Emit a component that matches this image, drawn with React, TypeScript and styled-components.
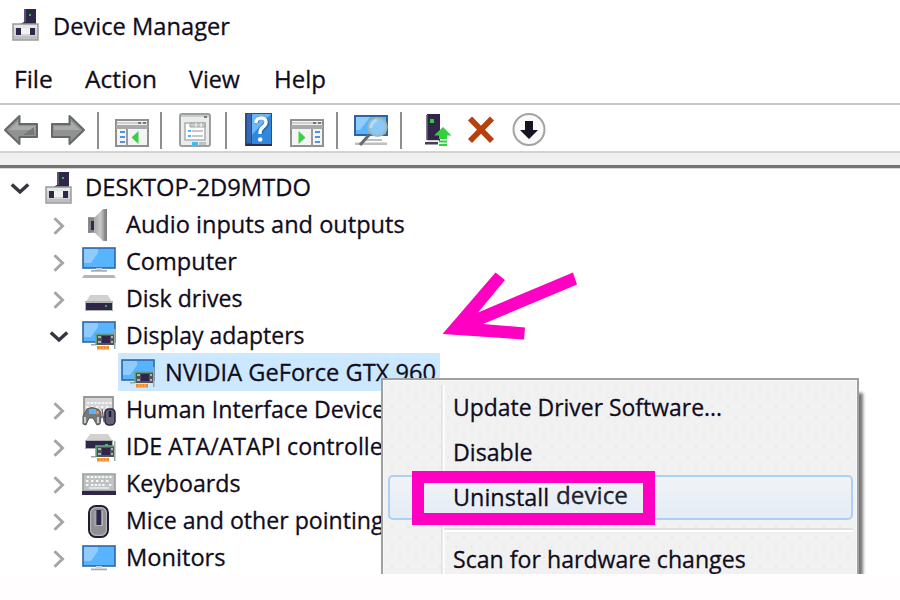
import React from "react";
import styled, { createGlobalStyle } from "styled-components";

const GlobalStyle = createGlobalStyle`
  * { box-sizing: border-box; }
  body { margin: 0; background: #fffdfe; overflow: hidden; }
`;

const Window = styled.main`
  position: relative;
  width: 900px;
  height: 574px;
  overflow: hidden;
  background: #fff;
  color: #100c1c;
  font-family: "Open Sans", "Noto Sans", sans-serif;
  font-size: 24.5px;
  line-height: 36px;
  white-space: nowrap;
`;

const Label = styled.span<{ $fit?: number }>`
  display: inline-block;
  transform: scaleX(${(p) => p.$fit ?? 0.96});
  transform-origin: left center;
  -webkit-text-stroke: 0.3px #100c1c;
`;

const Icon = styled.svg`
  display: block;
  flex: none;
  overflow: visible;
`;

const TitleBar = styled.header`
  display: flex;
  height: 54px;
  padding: 8px 0 0 12px;
  gap: 14px;
`;

const MenuBar = styled.nav`
  display: grid;
  grid-template-columns: 71px 104px 85px 80px;
  height: 49px;
  padding: 7px 0 0 14px;
`;

const Toolbar = styled.div`
  display: flex;
  align-items: flex-start;
  height: 48px;
  padding: 7px 0 0 4px;
  border-top: 2px solid #c3c6c5;
`;

const Tool = styled.div<{ $before: number }>`
  flex: none;
  padding-top: 1px;
  margin-left: ${(p) => p.$before}px;
`;

const Divider = styled.div<{ $before: number }>`
  width: 2px;
  height: 37px;
  margin-left: ${(p) => p.$before}px;
  background: #8e8f93;
`;

const Strip = styled.div`
  height: 17px;
  border-top: 2px solid #d3d3d3;
  border-bottom: 3px solid #707573;
  background: #f0f0f0;
  box-shadow: 0 1px 0 #d5d8d7;
`;

const Tree = styled.ul`
  display: flex;
  flex-direction: column;
  margin: 0;
  padding: 0;
  list-style: none;
`;

const Row = styled.li<{ $depth: number }>`
  display: flex;
  align-items: center;
  height: 37.1px;
  padding-left: ${(p) => 3 + p.$depth * 39.5}px;
`;

const Toggle = styled.div`
  display: flex;
  justify-content: center;
  width: 33px;
  padding-top: 4px;
  flex: none;
`;

const Entry = styled.div<{ $selected?: boolean; $root?: boolean }>`
  display: flex;
  align-items: center;
  height: 100%;
  width: ${(p) => (p.$selected ? "322px" : "auto")};
  margin-left: ${(p) => (p.$selected ? 3 : 0)}px;
  padding-left: ${(p) => (p.$selected ? 3 : p.$root ? 9 : 6.5)}px;
  gap: ${(p) => (p.$root ? 13 : 9.5)}px;
  background: ${(p) => (p.$selected ? "#cce8ff" : "transparent")};
`;

const IconSlot = styled.div<{ $drop: number }>`
  flex: none;
  padding-top: ${(p) => p.$drop}px;
`;

const ContextMenu = styled.div`
  position: absolute;
  left: 381px;
  top: 378px;
  width: 478px;
  height: 240px;
  padding: 5px 4px 0 5px;
  border: 2px solid #a0a0a0;
  background: #f1f1f1;
  box-shadow: inset 0 0 0 1px #f8f8f8, 5px 14px 3px -1px rgba(60, 60, 60, 0.7);
`;

const MenuSurface = styled.div`
  height: 100%;
  background-image:
    linear-gradient(#e2e2e2, #e2e2e2), linear-gradient(#fff, #fff),
    radial-gradient(circle, #e8e8e8 0.8px, transparent 1.5px),
    radial-gradient(circle, #e8e8e8 0.8px, transparent 1.5px);
  background-size: 1.5px 100%, 1.5px 100%, 16px 20px, 16px 20px;
  background-position: 53px 0, 54.5px 0, 60px 12px, 68px 22px;
  background-repeat: no-repeat, no-repeat, repeat, repeat;
`;

const MenuItem = styled.div<{ $active?: boolean }>`
  display: flex;
  align-items: center;
  height: 45px;
  padding: 0 0 2px 63px;
  border-radius: 5px;
  border: 2px solid ${(p) => (p.$active ? "#aed0f5" : "transparent")};
  background: ${(p) => (p.$active ? "linear-gradient(#f1f3f5, #e4ecf6)" : "transparent")};
`;

const Added = styled.span`
  margin-left: 2px;
  transform: translateY(-2px);
  color: #252530;
`;

const MenuRule = styled.div`
  height: 4px;
  margin: 8px 0 5px 56px;
  border-top: 2px solid #e0e0e0;
  border-bottom: 2px solid #fff;
`;

const Highlight = styled.div`
  position: absolute;
  left: 412px;
  top: 471px;
  width: 243px;
  height: 54px;
  border: 12px solid #ff00c3;
`;

const Arrow = styled.svg`
  position: absolute;
  left: 440px;
  top: 268px;
`;

const Hub = () => (
  <Icon width="27" height="34" viewBox="0 0 27 34">
    <path d="M12 1h12v15H8l4-2z" fill="#30264a" />
    <path d="M12 1h2v13h-2z" fill="#5a5468" />
    <path d="M17 6h2v2h-2z" fill="#27c43c" />
    <path d="M1 16h25v16H1z" fill="#d3d5d5" stroke="#989d9b" strokeWidth="1.5" />
    <path d="M2 17h23v3H2z" fill="#e5e6e6" />
    <path d="M4 20h5v7H4zM18 20h5v7h-5z" fill="#30264a" />
    <path d="M9 20h9v6H9z" fill="#f1f1f1" />
    <path d="M2 28h23v3H2z" fill="#bdc0bf" />
  </Icon>
);

const Screen = () => (
  <>
    <rect x="1" y="3" width="32" height="20" fill="#58b4ff" stroke="#3267a5" strokeWidth="1.6" />
    <path d="M2 4h14v4l-7 10H2z" fill="#8fcbfd" />
  </>
);

const ComputerIcon = () => (
  <Icon width="34" height="34" viewBox="0 0 34 34">
    <Screen />
    <path d="M14 23h6v2h-6z" fill="#d0d0d0" />
    <path d="M9 25h16v1.7H9z" fill="#a9abab" />
    <path d="M2 30h30l2 3H0z" fill="#b4b6b6" />
  </Icon>
);

const MonitorIcon = () => (
  <Icon width="34" height="34" viewBox="0 0 34 34">
    <g transform="translate(0 1)">
      <Screen />
      <path d="M14 23h6v2h-6z" fill="#d0d0d0" />
      <path d="M9 25.5h16v1.8H9z" fill="#a9abab" />
    </g>
  </Icon>
);

const Card = () => (
  <>
    <path d="M32 10h1.5v20H32zM9 25h5v1.5H9z" fill="#a1a4a4" />
    <path d="M14 15h18v11H14z" fill="#51525f" />
    <path d="M14 26V15h18" fill="none" stroke="#69ad85" strokeWidth="1.5" />
    <path d="M20 17h8v7h-8z" fill="#30264a" />
    <path d="M16 17h3v2h-3zM29 17h2v2h-2zM16 22h3v2h-3zM29 22h2v2h-2z" fill="#a3b8af" />
    <path d="M15 27h12v3.5H15z" fill="#f28a2c" />
    <path d="M18 27v3.5M21 27v3.5M24 27v3.5" stroke="#ffc488" strokeWidth=".7" />
  </>
);

const DisplayIcon = () => (
  <Icon width="34" height="34" viewBox="0 0 34 34">
    <Screen />
    <Card />
  </Icon>
);

const AudioIcon = () => (
  <Icon width="34" height="34" viewBox="0 0 34 34">
    <defs>
      <linearGradient id="cone">
        <stop stopColor="#8a8a8a" />
        <stop offset=".65" stopColor="#c9c9c9" />
        <stop offset="1" stopColor="#777" />
      </linearGradient>
    </defs>
    <path d="M6 9h7l8-8h4v32h-4l-8-8H6z" fill="url(#cone)" />
    <path d="M7 10h5v14H7z" fill="#858585" />
    <path d="M9 13h3v9H9z" fill="#342b45" />
    <path d="M13 10v14" stroke="#b0b0b0" strokeWidth="1.5" />
    <path d="M23.5 2v30" stroke="#858585" strokeWidth="2" />
  </Icon>
);

const DiskIcon = () => (
  <Icon width="34" height="34" viewBox="0 0 34 34">
    <path d="M8 13h18l4 7H4z" fill="#d1d1d1" />
    <path d="M3 19h28v10H3z" fill="#afb3b3" />
    <path d="M4 21h26v7H4z" fill="#30264a" />
    <path d="M23 23h2v2h-2z" fill="#28be37" />
  </Icon>
);

const KeyRows = () => (
  <path d="M5 9h25M4 13h3m2 0h3m2 0h3m2 0h3m2 0h3M4 17h3m2 0h15m3 0h3" stroke="#f6f6f6" strokeWidth="1.8" strokeDasharray="2.4 1.3" />
);

const HidIcon = () => (
  <Icon width="34" height="34" viewBox="0 0 34 34">
    <path d="M2 3h29v20H2z" fill="#d5d5d5" stroke="#969999" strokeWidth="1.8" />
    <KeyRows />
    <path d="M5 15q5-3 10 0q4 0 4 8l-1 7-3 1-4-7H7l-3 7-3-1V22z" fill="#777979" stroke="#555b5b" />
    <path d="M7 15h7v5H7z" fill="#58b4ff" />
    <path d="M14 17h3v3h-3z" fill="#ef873c" />
    <path d="M2 23h2v6H2zM15 23h2v6h-2z" fill="#ccc" />
    <rect x="23" y="15" width="10" height="16" rx="4" fill="#666374" stroke="#30264a" strokeWidth="1.6" />
    <path d="M28 17v6" stroke="#211935" strokeWidth="2.5" />
    <path d="M20 15l2 13" stroke="#555" />
  </Icon>
);

const IdeIcon = () => (
  <Icon width="34" height="34" viewBox="0 0 34 34">
    <path d="M8 3h18l4 6H4z" fill="#d1d1d1" />
    <path d="M3 9h28v9H3z" fill="#acafaf" />
    <path d="M4 10h26v7H4z" fill="#30264a" />
    <Card />
    <path d="M23 13h3v2h-3z" fill="#28d437" />
  </Icon>
);

const KeyboardIcon = () => (
  <Icon width="34" height="34" viewBox="0 0 34 34">
    <path d="M1 6h32v17H1z" fill="#bfc2c2" stroke="#999e9d" strokeWidth="1.6" />
    <KeyRows />
    <path d="M7 20h20" stroke="#eee" strokeWidth="1.5" />
    <path d="M0 23h34v4H0z" fill="#30264a" />
  </Icon>
);

const MouseIcon = () => (
  <Icon width="34" height="34" viewBox="0 0 34 34">
    <rect x="7" y="1" width="19" height="31" rx="7" fill="#8d8f90" stroke="#211c32" strokeWidth="2" />
    <rect x="8.6" y="2.6" width="15.8" height="27.8" rx="5.5" fill="none" stroke="#b4b5b7" strokeWidth="1.2" />
    <path d="M14.5 5h4.5v15h-4.5z" fill="#30264a" />
    <path d="M13 6v14.5h7.5V6" stroke="#b5b5b7" fill="none" />
  </Icon>
);

const Chevron = ({ open }: { open?: boolean }) =>
  open ? (
    <Icon width="20" height="14" viewBox="0 0 20 14">
      <path d="M1.8 2.5 10 10l8.2-7.5" fill="none" stroke="#383441" strokeWidth="3.5" />
    </Icon>
  ) : (
    <Icon width="14" height="20" viewBox="0 0 14 20">
      <path d="M2.5 2.2 10.5 10l-8 7.8" fill="none" stroke="#a5a5a6" strokeWidth="3" />
    </Icon>
  );

const Nav = ({ forward }: { forward?: boolean }) => (
  <Icon width="34" height="34" viewBox="0 0 34 34">
    <g transform={forward ? "translate(34 0) scale(-1 1)" : undefined}>
      <path d="M1 17 15.5 3v8H33v13H15.5v7z" fill="#929292" stroke="#66696a" strokeWidth="2" strokeLinejoin="round" />
      <path d="M5 17 14 8v5h17v4z" fill="#a9aaaa" />
      {!forward && <path d="M19 22 30 14v8z" fill="#73787a" />}
    </g>
  </Icon>
);

const PanelIcon = ({ right }: { right?: boolean }) => (
  <Icon width="34" height="34" viewBox="0 0 34 34">
    <path d="M1 7h32v26H1z" fill="#f4f4f4" stroke="#8e9092" strokeWidth="2" />
    <path d="M2 9h30v2H2z" fill="#cfcfcf" />
    <path d="M1 12h32v4H1z" fill="#a7aaac" />
    <path d="M23 9h3v2h-3zM28 9h3v2h-3z" fill="#777" />
    {right ? (
      <>
        <path d="M22 16v17" stroke="#999b9d" strokeWidth="2" />
        <path d="M25 19h5M25 24h5M25 29h5" stroke="#4c96dc" strokeWidth="2" />
        <path d="M8.5 18v13l7-6.5z" fill="#35d343" />
      </>
    ) : (
      <>
        <path d="M12 16v17" stroke="#999b9d" strokeWidth="2" />
        <path d="M5 19h5M5 24h5M5 29h5" stroke="#4c96dc" strokeWidth="2" />
        <path d="M23.5 18v13l-7-6.5z" fill="#35d343" />
      </>
    )}
  </Icon>
);

const PropertiesIcon = () => (
  <Icon width="34" height="34" viewBox="0 0 34 34">
    <rect x="2" y="1" width="30" height="32" rx="2" fill="#ececec" stroke="#9b9fa0" strokeWidth="2" />
    <path d="M3 2h28v2H3z" fill="#c9cbcb" />
    <path d="M26 3h3v2h-3z" fill="#777" />
    <path d="M7 10h20v17H7z" fill="#fff" stroke="#aeb1b2" strokeWidth="1.6" />
    <path d="M12 10h15v4H12z" fill="#c8cbcb" stroke="#a0a3a4" />
    <path d="M18 10v4M23 10v4" stroke="#fff" />
    <path d="M10 18h3M10 23h3" stroke="#4ab5f7" strokeWidth="2" />
    <path d="M14 18h11M14 23h11" stroke="#b1b4b5" strokeWidth="1.6" />
    <path d="M14 29h6v3h-6z" fill="#3bbdf8" />
    <path d="M21 29h7v3h-7z" fill="#bfc2c3" />
  </Icon>
);

const HelpIcon = () => (
  <Icon width="27" height="34" viewBox="0 0 27 34">
    <path d="M0 0h27v33H0z" fill="#234f93" />
    <path d="M2 1h4v29H2z" fill="#3a68ae" />
    <path d="M7 1h19v30H7z" fill="#3087dc" />
    <path d="M7 1h19L7 22z" fill="#6bb7f5" />
    <path d="M12 10q-1-5 4-5 6 0 6 5 0 3-3 5-3 2-3 6" fill="none" stroke="#2867ab" strokeWidth="4" />
    <path d="M11 10q0-5 5-5 5 0 5 4 0 3-3 5-3 2-3 7" fill="none" stroke="#fff" strokeWidth="3.4" />
    <circle cx="15.2" cy="26.5" r="2.3" fill="#f6f6f6" />
    <path d="M1 32h26" stroke="#332952" strokeWidth="2" />
  </Icon>
);

const ScanIcon = () => (
  <Icon width="34" height="34" viewBox="0 0 34 34">
    <rect x="1" y="3" width="32" height="19" fill="#58b4ff" stroke="#2e64a5" strokeWidth="2" />
    <path d="M2 4h14L6 17H2z" fill="#92ccfc" />
    <path d="M10 26h18v2H10zM1 29.5h32v2.5H1z" fill="#bcbebf" />
    <path d="m15 22-9 10" stroke="#666b70" strokeWidth="3.2" />
    <circle cx="23.5" cy="14" r="9" fill="#8cc8f7" stroke="#9cb9b5" strokeWidth="2.2" />
    <path d="M17 15q0-6 6-8" fill="none" stroke="#b1ddfb" strokeWidth="3" />
  </Icon>
);

const UpdateIcon = () => (
  <Icon width="28" height="34" viewBox="0 0 28 34">
    <path d="M3 1h13v27H3z" fill="#30264a" />
    <path d="M2 2h1.5v25H2z" fill="#817c8b" />
    <path d="M6 6h4v4H6z" fill="#27cf38" />
    <path d="M1 29h13v2.5H1z" fill="#45404f" />
    <path d="M3 27h12v1.5H3z" fill="#d2d2d2" />
    <path d="m19 14 8.5 8.5H23V26h-8v-3.5h-5z" fill="#33cf3d" />
    <path d="M15 27.5h8v2h-8zM15 31h8v2h-8z" fill="#33cf3d" />
  </Icon>
);

const RemoveIcon = () => (
  <Icon width="28" height="34" viewBox="0 0 28 34">
    <path d="M3 5.5 25 28M25 5.5 3 28" stroke="#b7410e" strokeWidth="5.7" />
  </Icon>
);

const DisableIcon = () => (
  <Icon width="34" height="34" viewBox="0 0 34 34">
    <circle cx="17" cy="16.5" r="15.5" fill="#fafafa" stroke="#a1a4a4" strokeWidth="2" />
    <path d="M13 8h8v9h5l-9 9-9-9h5z" fill="#181324" />
  </Icon>
);

type Node = {
  name: string;
  depth: number;
  icon: () => React.JSX.Element;
  open?: boolean;
  leaf?: boolean;
  fit: number;
};

const devices: Node[] = [
  { name: "DESKTOP-2D9MTDO", depth: 0, icon: Hub, open: true, fit: 0.969 },
  { name: "Audio inputs and outputs", depth: 1, icon: AudioIcon, fit: 0.962 },
  { name: "Computer", depth: 1, icon: ComputerIcon, fit: 0.962 },
  { name: "Disk drives", depth: 1, icon: DiskIcon, fit: 0.942 },
  { name: "Display adapters", depth: 1, icon: DisplayIcon, open: true, fit: 0.937 },
  { name: "NVIDIA GeForce GTX 960", depth: 2, icon: DisplayIcon, leaf: true, fit: 0.964 },
  { name: "Human Interface Devices", depth: 1, icon: HidIcon, fit: 0.945 },
  { name: "IDE ATA/ATAPI controllers", depth: 1, icon: IdeIcon, fit: 0.945 },
  { name: "Keyboards", depth: 1, icon: KeyboardIcon, fit: 0.946 },
  { name: "Mice and other pointing devices", depth: 1, icon: MouseIcon, fit: 0.944 },
  { name: "Monitors", depth: 1, icon: MonitorIcon, fit: 0.965 },
];

export default function App() {
  return (
    <>
      <GlobalStyle />
      <Window>
        <TitleBar>
          <Hub />
          <Label $fit={0.966}>Device Manager</Label>
        </TitleBar>
        <MenuBar>
          <Label $fit={1}>File</Label>
          <Label $fit={1}>Action</Label>
          <Label $fit={0.95}>View</Label>
          <Label $fit={0.98}>Help</Label>
        </MenuBar>
        <Toolbar>
          <Tool $before={0}><Nav /></Tool>
          <Tool $before={13}><Nav forward /></Tool>
          <Divider $before={12} />
          <Tool $before={16}><PanelIcon /></Tool>
          <Divider $before={11} />
          <Tool $before={16}><PropertiesIcon /></Tool>
          <Divider $before={13} />
          <Tool $before={18}><HelpIcon /></Tool>
          <Tool $before={18}><PanelIcon right /></Tool>
          <Divider $before={12} />
          <Tool $before={16}><ScanIcon /></Tool>
          <Divider $before={12} />
          <Tool $before={22}><UpdateIcon /></Tool>
          <Tool $before={15}><RemoveIcon /></Tool>
          <Tool $before={17}><DisableIcon /></Tool>
        </Toolbar>
        <Strip />
        <Tree>
          {devices.map((d) => (
            <Row key={d.name} $depth={d.depth}>
              <Toggle>{!d.leaf && <Chevron open={d.open} />}</Toggle>
              <Entry $selected={d.leaf} $root={d.depth === 0}>
                <IconSlot $drop={d.depth === 0 ? 2 : 3}>
                  <d.icon />
                </IconSlot>
                <Label $fit={d.fit}>{d.name}</Label>
              </Entry>
            </Row>
          ))}
        </Tree>
        <ContextMenu>
          <MenuSurface>
            <MenuItem><Label $fit={0.936}>Update Driver Software...</Label></MenuItem>
            <MenuItem><Label $fit={0.946}>Disable</Label></MenuItem>
            <MenuItem $active>
              <Label $fit={0.956}>Uninstall</Label>
              <Added><Label $fit={0.99}>device</Label></Added>
            </MenuItem>
            <MenuRule />
            <MenuItem><Label $fit={0.944}>Scan for hardware changes</Label></MenuItem>
          </MenuSurface>
        </ContextMenu>
        <Highlight />
        <Arrow width="140" height="80" viewBox="440 268 140 80">
          <path d="M442.5 334 495.5 272.5 505 280 478 312.5 573 272.5 577 284.5 483 324 525 327.5 524 339.5Z" fill="#ff00c3" />
        </Arrow>
      </Window>
    </>
  );
}
